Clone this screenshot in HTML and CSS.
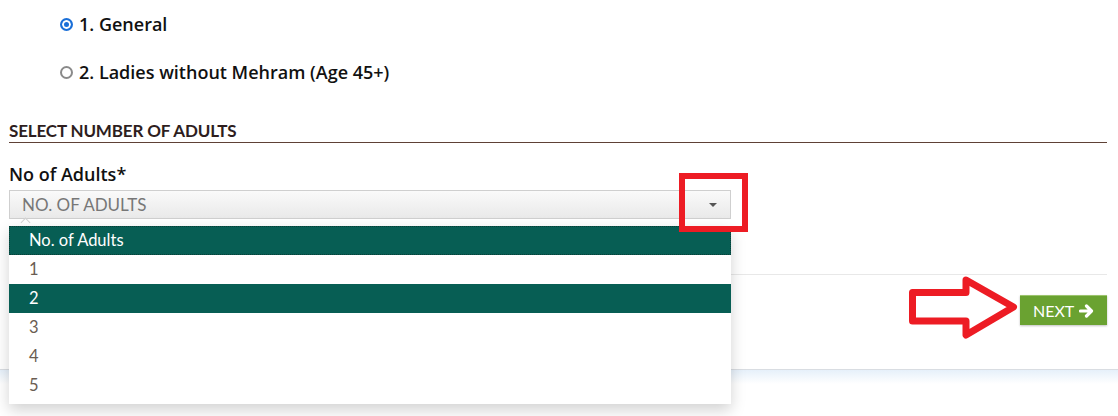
FILE: index.html
```html
<!DOCTYPE html>
<html lang="en">
<head>
    <meta charset="UTF-8">
    <title>Select Adults</title>
    <link rel="stylesheet" href="styles.css">
</head>
<body>
    <div class="page">
        <div class="card">
            <div class="radios">
                <label class="radio-row">
                    <span class="radio checked"></span>
                    <span class="radio-text">1. General</span>
                </label>
                <label class="radio-row">
                    <span class="radio"></span>
                    <span class="radio-text">2. Ladies without Mehram (Age 45+)</span>
                </label>
            </div>

            <div class="section">
                <p class="section-title">SELECT NUMBER OF ADULTS</p>
                <p class="field-label">No of Adults*</p>
                <div class="select-wrap">
                    <div class="select">
                        <span>NO. OF ADULTS</span>
                        <span class="caret"></span>
                    </div>
                    <span class="notch"></span>
                    <ul class="dropdown">
                        <li class="active first">No. of Adults</li>
                        <li>1</li>
                        <li class="active">2</li>
                        <li>3</li>
                        <li>4</li>
                        <li>5</li>
                    </ul>
                </div>
            </div>

            <div class="footer">
                <button class="next-btn">NEXT
                    <svg width="15" height="14" viewBox="0 0 15 14">
                        <path d="M1.5 7 H12 M7.5 2 L12.5 7 L7.5 12" fill="none" stroke="#fff" stroke-width="3.2" stroke-linecap="round" stroke-linejoin="round"/>
                    </svg>
                </button>
            </div>
        </div>
        <div class="below"></div>

        <!-- annotations -->
        <div class="mark-box"></div>
        <svg class="mark-arrow" width="120" height="70" viewBox="905 274 120 70">
            <polygon points="912.5,292.5 966,292.5 966,280 1013.5,307 966,335 966,321 912.5,321" fill="none" stroke="#ed1c24" stroke-width="7" stroke-linejoin="round"/>
        </svg>
    </div>
</body>
</html>
```

FILE: styles.css
```css
* {
    box-sizing: border-box;
}

body {
    margin: 0;
    background: #ffffff;
    font-family: 'Open Sans', 'Liberation Sans', sans-serif;
    overflow: hidden;
}

.page {
    position: relative;
    width: 1118px;
    height: 416px;
}

.card {
    background: #ffffff;
    border-bottom: 1px solid #d9dde2;
}

.below {
    height: 14px;
    background: linear-gradient(#e6f0fa, #ffffff);
}

/* radio options */
.radios {
    padding: 12px 0 0 60px;
}

.radio-row {
    display: flex;
    align-items: center;
    height: 24px;
    margin-bottom: 24px;
}

.radio {
    width: 13px;
    height: 13px;
    border-radius: 50%;
    border: 2px solid #8a8a8a;
    margin-right: 6px;
    background: #fff;
}

.radio.checked {
    border: 2px solid #1a6fd8;
    box-shadow: inset 0 0 0 2px #fff;
    background: #1a6fd8;
}

.radio-text {
    font-size: 18px;
    font-weight: 600;
    color: #111;
}

/* adults section */
.section {
    padding: 0 11px 0 9px;
}

.section-title {
    margin: 38px 0 0 0;
    padding-bottom: 2px;
    font-family: Lato, 'Liberation Sans', sans-serif;
    font-size: 17px;
    font-weight: 700;
    line-height: 18px;
    letter-spacing: -0.15px;
    color: #2e1e1e;
    border-bottom: 1px solid #5e4136;
}

.field-label {
    margin: 19px 0 0 0;
    font-size: 18px;
    font-weight: 600;
    line-height: 24px;
    color: #111;
}

.select-wrap {
    position: relative;
    width: 722px;
    margin-top: 4px;
}

.select {
    display: flex;
    justify-content: space-between;
    align-items: center;
    height: 29px;
    padding: 0 13px 0 12px;
    border: 1px solid #cfcfcf;
    background: linear-gradient(#fafafa, #e9e9e9);
    font-family: Lato, 'Liberation Sans', sans-serif;
    font-size: 17px;
    color: #777;
}

.caret {
    width: 0;
    height: 0;
    border-left: 4px solid transparent;
    border-right: 4px solid transparent;
    border-top: 4px solid #555;
}

.notch {
    position: absolute;
    left: 13px;
    top: 29px;
    width: 7px;
    height: 7px;
    border-left: 1px solid #d4d4d4;
    border-top: 1px solid #d4d4d4;
    transform: rotate(45deg);
    z-index: 1;
}

.dropdown {
    position: absolute;
    left: 0;
    top: 36px;
    width: 722px;
    margin: 0;
    padding: 0 0 4px 0;
    list-style: none;
    background: #fff;
    box-shadow: 0 6px 14px rgba(0, 0, 0, 0.18);
    z-index: 2;
    font-family: Lato, 'Liberation Sans', sans-serif;
    font-size: 16.5px;
}

.dropdown li {
    height: 29px;
    line-height: 29px;
    padding-left: 20px;
    color: #6a5d52;
}

.dropdown li.active {
    background: #075e54;
    color: #fff;
}

.dropdown li.first {
    outline: 1px dotted #0a3f38;
    outline-offset: -1px;
}

/* footer */
.footer {
    display: flex;
    justify-content: flex-end;
    margin: 55px 11px 0 9px;
    padding: 20px 0 44px 0;
    border-top: 1px solid #e8e8e8;
}

.next-btn {
    display: flex;
    align-items: center;
    gap: 5px;
    height: 30px;
    width: 87px;
    padding: 0 0 0 13px;
    border: none;
    border-top: 1px solid #9cc46c;
    background: #6aa231;
    color: #fff;
    font-family: Lato, 'Liberation Sans', sans-serif;
    font-size: 16px;
    box-shadow: 0 1px 2px rgba(0, 0, 0, 0.25);
}

/* red annotations */
.mark-box {
    position: absolute;
    left: 679px;
    top: 173px;
    width: 69px;
    height: 59px;
    border: 6px solid #ed1c24;
    z-index: 5;
}

.mark-arrow {
    position: absolute;
    left: 905px;
    top: 274px;
}
```
